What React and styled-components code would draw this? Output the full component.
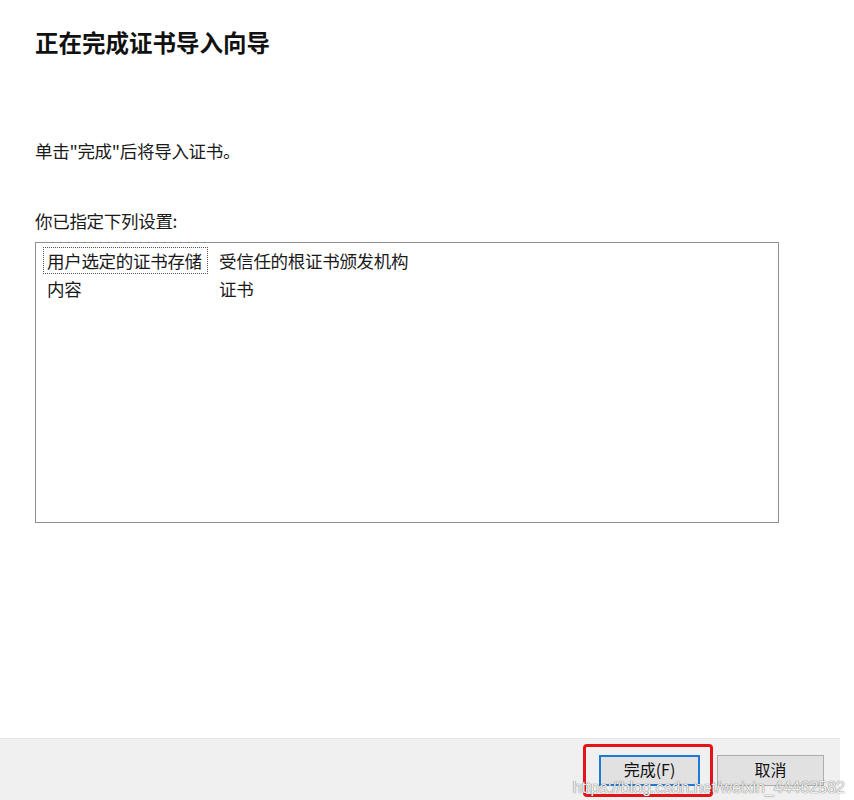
import React from 'react';
import styled, { createGlobalStyle } from 'styled-components';

const GlobalStyle = createGlobalStyle`
  html, body {
    margin: 0;
    padding: 0;
    background: #fff;
  }
  body {
    font-family: "Noto Sans CJK SC", "Liberation Sans", sans-serif;
    color: #1a1a1a;
  }
`;

const Wizard = styled.div`
  position: relative;
  width: 840px;
  height: 800px;
  display: flex;
  flex-direction: column;
  background: #fff;
`;

const Content = styled.main`
  flex: 1;
  padding: 27px 0 0 35px;
`;

const Title = styled.h1`
  margin: 0;
  font-size: 23.5px;
  line-height: 30px;
  font-weight: bold;
  color: #111;
`;

const Text = styled.p`
  margin: ${(p) => p.$top}px 0 0;
  font-size: 17.5px;
  line-height: 24px;
  letter-spacing: -0.3px;
`;

const SettingsList = styled.div`
  margin-top: 9px;
  width: 735px;
  height: 276px;
  border: 1px solid #8f8f8f;
  padding: 3px 0 0 7px;
  box-sizing: content-box;
`;

const Row = styled.div`
  display: flex;
  height: 28px;
  align-items: center;
  font-size: 17.5px;
  letter-spacing: -0.3px;
`;

const Cell = styled.span`
  box-sizing: border-box;
  height: 27px;
  line-height: 25px;
  width: ${(p) => (p.$first ? '165px' : 'auto')};
  padding-left: ${(p) => (p.$first ? '3px' : '10px')};
  border: 1px dotted ${(p) => (p.$focused ? '#555' : 'transparent')};
  white-space: nowrap;
`;

const Footer = styled.footer`
  height: 61px;
  background: #f0f0f0;
  border-top: 1px solid #e6e6e6;
  display: flex;
  justify-content: flex-end;
  align-items: center;
  padding-right: 16px;
  gap: 4px;
`;

const Highlight = styled.div`
  display: flex;
  padding: 8px 10px 8px 13px;
  border: 3px solid #e5141b;
  border-radius: 4px;
  margin-top: 2px;
`;

const Button = styled.button`
  box-sizing: border-box;
  width: ${(p) => p.$w}px;
  height: 31px;
  background: #e1e1e1;
  border: ${(p) => (p.$primary ? '2px solid #1f7ad6' : '1px solid #adadad')};
  font-family: "Noto Sans CJK SC", "Liberation Sans", sans-serif;
  font-size: 16px;
  line-height: 1;
  color: #111;
  padding: 0 0 3px;
  margin-top: ${(p) => (p.$primary ? '0' : '2px')};
`;

const Watermark = styled.div`
  position: absolute;
  right: -5px;
  top: 781px;
  font-family: "Liberation Sans", Arial, sans-serif;
  font-size: 16px;
  line-height: 13px;
  color: rgba(255, 255, 255, 0.9);
  text-shadow: 0 0 1px rgba(90, 90, 90, 0.8), 0 0 1px rgba(90, 90, 90, 0.6);
  pointer-events: none;
`;

const settings = [
  ['用户选定的证书存储', '受信任的根证书颁发机构'],
  ['内容', '证书'],
];

export default function App() {
  return (
    <>
      <GlobalStyle />
      <Wizard>
        <Content>
          <Title>正在完成证书导入向导</Title>
          <Text $top={82}>单击"完成"后将导入证书。</Text>
          <Text $top={46}>你已指定下列设置:</Text>
          <SettingsList>
            {settings.map(([k, v], i) => (
              <Row key={k}>
                <Cell $first $focused={i === 0}>{k}</Cell>
                <Cell>{v}</Cell>
              </Row>
            ))}
          </SettingsList>
        </Content>
        <Footer>
          <Highlight>
            <Button $primary $w={101}>完成(F)</Button>
          </Highlight>
          <Button $w={107}>取消</Button>
        </Footer>
        <Watermark>https://blog.csdn.net/weixin_44462582</Watermark>
      </Wizard>
    </>
  );
}
